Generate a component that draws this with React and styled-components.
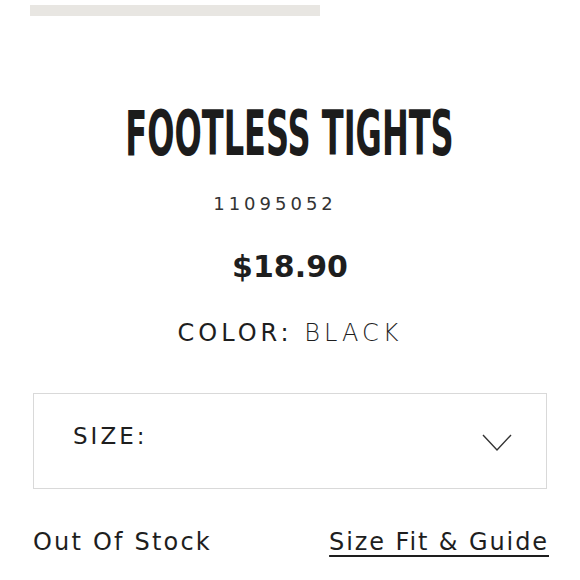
import styled, { createGlobalStyle } from "styled-components";

const GlobalStyle = createGlobalStyle`
  html, body {
    margin: 0;
    padding: 0;
    background: #ffffff;
  }
  body {
    font-family: "DejaVu Sans", "Open Sans", sans-serif;
    color: #1e1e1e;
  }
`;

const Page = styled.div`
  width: 580px;
  height: 580px;
  overflow: hidden;
  padding: 5px 33px 0 33px;
  box-sizing: border-box;
  display: flex;
  flex-direction: column;
`;

const ImageStrip = styled.div`
  width: 290px;
  height: 11px;
  margin-left: -3px;
  background: #e8e6e2;
`;

const Title = styled.h1`
  margin: 91px 0 0 0;
  height: 54px;
  display: flex;
  justify-content: center;
  align-items: center;
`;

const TitleText = styled.span`
  display: inline-block;
  font-family: "DejaVu Sans Condensed", "Liberation Sans", sans-serif;
  font-weight: 700;
  font-size: 62px;
  line-height: 1;
  color: #1c1c1c;
  transform: scaleX(0.575);
  white-space: nowrap;
`;

const Sku = styled.div`
  margin-top: 33px;
  text-align: center;
  padding-right: 30px;
  font-size: 18px;
  letter-spacing: 4px;
  font-weight: 500;
  color: #333;
  line-height: 20px;
`;

const Price = styled.div`
  margin-top: 35px;
  text-align: center;
  font-size: 30px;
  font-weight: 700;
  color: #1e1e1e;
  line-height: 36px;
`;

const Color = styled.div`
  margin-top: 33px;
  text-align: center;
  font-size: 24px;
  letter-spacing: 4px;
  line-height: 30px;
  color: #1e1e1e;
`;

const Label = styled.span`
  font-weight: 500;
`;

const Value = styled.span`
  font-weight: 300;
`;

const SizeSelect = styled.div`
  margin-top: 45px;
  height: 96px;
  box-sizing: border-box;
  border: 1px solid #d9d9d9;
  display: flex;
  align-items: center;
  justify-content: space-between;
  padding: 0 34px 0 39px;
`;

const SizeLabel = styled.span`
  font-size: 23px;
  letter-spacing: 3px;
  margin-top: -10px;
  color: #1e1e1e;
`;

const Chevron = styled.svg`
  width: 30px;
  height: 18px;
  margin-top: 4px;
`;

const Footer = styled.div`
  margin-top: 39px;
  display: flex;
  justify-content: space-between;
  align-items: baseline;
  font-size: 24px;
  color: #1e1e1e;
`;

const Stock = styled.span`
  letter-spacing: 2.2px;
`;

const GuideLink = styled.a`
  color: #1e1e1e;
  letter-spacing: 1.9px;
  margin-right: -2px;
  text-decoration: underline;
  text-underline-offset: 5px;
  text-decoration-thickness: 2px;
`;

export default function App() {
  return (
    <>
      <GlobalStyle />
      <Page>
        <ImageStrip />
        <Title>
          <TitleText>FOOTLESS TIGHTS</TitleText>
        </Title>
        <Sku>11095052</Sku>
        <Price>$18.90</Price>
        <Color>
          <Label>COLOR:</Label> <Value>BLACK</Value>
        </Color>
        <SizeSelect>
          <SizeLabel>SIZE:</SizeLabel>
          <Chevron viewBox="0 0 30 18">
            <path d="M1 1 L15 16 L29 1" fill="none" stroke="#333" strokeWidth="1.4" />
          </Chevron>
        </SizeSelect>
        <Footer>
          <Stock>Out Of Stock</Stock>
          <GuideLink href="#">Size Fit &amp; Guide</GuideLink>
        </Footer>
      </Page>
    </>
  );
}
